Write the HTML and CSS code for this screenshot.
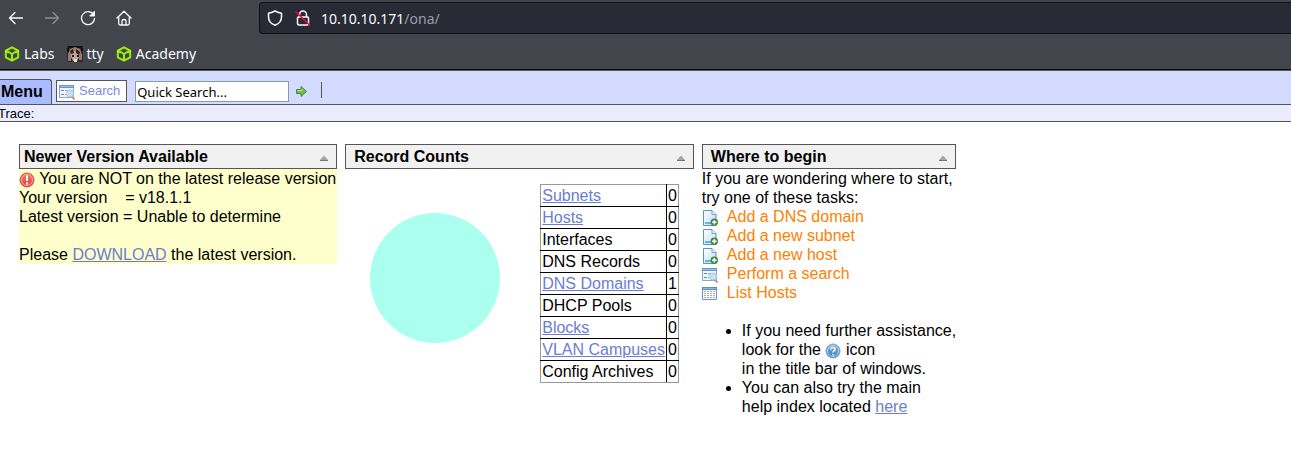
FILE: index.html
```html
<!DOCTYPE html>
<html lang="en">
<head>
<meta charset="utf-8">
<title>OpenNetAdmin</title>
<link rel="stylesheet" href="styles.css">
</head>
<body>
<svg class="defs" aria-hidden="true">
  <defs>
    <linearGradient id="page-fill" x1="0" y1="0" x2="1" y2="1"><stop offset="0" stop-color="#fff"/><stop offset="1" stop-color="#bddcf8"/></linearGradient>
    <linearGradient id="red-fill" x1="0" y1="0" x2="0" y2="1"><stop offset="0" stop-color="#f48068"/><stop offset="1" stop-color="#d93b36"/></linearGradient>
    <linearGradient id="blue-fill" x1="0" y1="0" x2="0" y2="1"><stop offset="0" stop-color="#86b3e4"/><stop offset="1" stop-color="#4379b9"/></linearGradient>
  </defs>
  <symbol id="cube" viewBox="0 0 16 16"><path d="M8 1.300 14.200 4.600v6.800L8 14.700 1.800 11.400V4.600ZM2.300 4.700 8 8l5.700-3.300M8 8v6.500" fill="none" stroke="#9fef00" stroke-width="2" stroke-linejoin="round"/></symbol>
  <symbol id="collapse" viewBox="0 0 8 5"><path d="M3.500 0h1L8 4v1H0V4Z" fill="#a5a5a5"/><path d="M0 4.500h8" stroke="#777"/></symbol>
  <symbol id="page-add" viewBox="0 0 16 16">
    <path d="M1.500.5h8.500l4 4v11H1.500Z" fill="url(#page-fill)" stroke="#5f91c9"/><path d="M10 .5v4h4" fill="#e6f2fd" stroke="#76a5d8"/><path d="M3 13h7" stroke="#55b9f0" stroke-width="2"/>
    <circle cx="12.300" cy="12.300" r="3.700" fill="#44883a"/><path d="M12.300 10v4.600M10 12.300h4.600" stroke="#fff" stroke-width="1.500"/>
  </symbol>
  <symbol id="form-search" viewBox="0 0 16 16">
    <path d="M.5 1.500h14v12H.5Z" fill="#f0f5fb" stroke="#84a8d3"/><path d="M0 2.500h15" stroke="#6398d2" stroke-width="3"/><path d="M1 2.500h13" stroke="#9cc0e8"/>
    <path d="M2 6.500h3M2 10.500h3" stroke="#548ccc"/><path d="M6 6.500h3M6 10.500h2" stroke="#aaa"/>
    <path d="m13 13 2.500 2.500" stroke="#dc9360" stroke-width="2"/><circle cx="11" cy="9.500" r="3.500" fill="#c5e1f8" stroke="#a9c7e3"/>
  </symbol>
  <symbol id="table-list" viewBox="0 0 16 16">
    <path d="M.5 1.500h14v12H.5Z" fill="#fff" stroke="#7294c4"/><path d="M0 2.500h15" stroke="#5d8dcb" stroke-width="3"/><path d="M1 2.500h13" stroke="#91b5df"/>
    <path d="M2 5.500h11M2 7.500h11M2 9.500h11M2 11.500h11" stroke="#a2adbd" stroke-dasharray="2 1"/>
  </symbol>
</svg>

<header class="browser">
  <div class="nav">
    <div class="nav-buttons">
      <button class="nav-button" aria-label="Back"><svg viewBox="0 0 16 16"><path d="M14.500 8H1.500M7 2.500 1.500 8 7 13.500"/></svg></button>
      <button class="nav-button" aria-label="Forward" disabled><svg viewBox="0 0 16 16"><path d="M1.500 8h13M9 2.500 14.500 8 9 13.500"/></svg></button>
      <button class="nav-button" aria-label="Reload"><svg viewBox="0 0 16 16"><path d="M13.700 5A6.500 6.500 0 1 0 14.500 8.500"/><path d="M14.500 1.500v4.500H10Z" fill="#fbfbfe" stroke-width="1"/></svg></button>
      <button class="nav-button" aria-label="Home"><svg viewBox="0 0 16 16"><path d="M1 8 8 1.300 15 8M2.700 7v6.500q0 1.500 1.500 1.500h7.600q1.500 0 1.500-1.500V7M6 15v-4q0-1.500 2-1.500t2 1.500v4"/></svg></button>
    </div>
    <div class="address">
      <svg class="chrome-icon" viewBox="0 0 16 16"><path d="M8 .8c2 1.500 4.300 2 6.500 2.400v3.600C14.500 11 11.800 14 8 15.300 4.200 14 1.500 11 1.500 6.800V3.200C3.700 2.800 6 2.300 8 .8Z"/></svg>
      <svg class="chrome-icon" viewBox="0 0 16 16"><path d="M4.500 7V4.500a3.500 3.500 0 0 1 7 0V7M3.500 7h9q1 0 1 1v5.500q0 1.500-1.500 1.500H4q-1.500 0-1.500-1.500V8q0-1 1-1Z"/><path class="slash" d="m1 2 13.500 13"/></svg>
      <span class="url">10.10.10.171<span class="path">/ona/</span></span>
    </div>
  </div>
  <nav class="bookmarks">
    <a href="#labs"><svg><use href="#cube"/></svg>Labs</a>
    <a href="#tty"><svg viewBox="0 0 16 16"><path d="M0 0h16v16H0Z" fill="#30292a"/><path d="M1 0h14v2H1Z" fill="#111"/><path d="M1 8 3 3l5-2 5 2 2 6v5h-3V8H4v7H1Z" fill="#9c7866"/><path d="M4 5h8v6l-2 4H6l-2-4Z" fill="#b7a89c"/><path d="M3 5 6 3l1 4-3 1ZM9 3l4 3-1 3-3-2Z" fill="#292326"/><path d="M5 9h2v2H5ZM10 9h2v2h-2Z" fill="#171b22"/><path d="M7 13h3v3H7Z" fill="#e8ded6"/><path d="M0 2h2v4H0ZM14 2h2v3h-2Z" fill="#0c0f13"/></svg>tty</a>
    <a href="#academy"><svg><use href="#cube"/></svg>Academy</a>
  </nav>
</header>

<div class="toolbar">
  <button class="menu">Menu</button>
  <button class="search"><svg class="icon"><use href="#form-search"/></svg>Search</button>
  <input class="quick" type="text" value="Quick Search..." aria-label="Quick Search">
  <button class="go" aria-label="Go"><svg viewBox="0 0 11 11"><path d="M.5 3.500h4.500v-3l5.500 5-5.500 5v-3H.5Z" fill="#78bd4b" stroke="#438737"/><path d="M1.500 4.500h4.500V3" fill="none" stroke="#b5df91"/></svg></button>
  <span class="separator"></span>
</div>
<div class="trace">Trace:</div>

<main class="desktop">
  <section class="module">
    <h2 class="title title-first">Newer Version Available <button aria-label="Collapse version"><svg><use href="#collapse"/></svg></button></h2>
    <div class="notice">
      <div><svg class="icon" viewBox="0 0 16 16"><circle cx="8" cy="8" r="7" fill="url(#red-fill)" stroke="#d95149"/><circle cx="8" cy="8" r="5.500" fill="none" stroke="#f8ada0"/><path d="M8 3.500v5.500M8 10.500v2" stroke="#fff" stroke-width="2"/></svg> You are NOT on the latest release version</div>
      <div>Your version &nbsp;&nbsp; = v18.1.1</div>
      <div>Latest version = Unable to determine</div>
      <br>
      <div>Please <a href="#download">DOWNLOAD</a> the latest version.</div>
    </div>
  </section>

  <section class="module">
    <h2 class="title">Record Counts <button aria-label="Collapse counts"><svg><use href="#collapse"/></svg></button></h2>
    <div class="counts">
      <svg class="pie" viewBox="0 0 130 130" role="img" aria-label="Record chart"><circle cx="65" cy="65" r="65" fill="#aaffee"/></svg>
      <table>
        <tr><td><a href="#subnets">Subnets</a></td><td>0</td></tr>
        <tr><td><a href="#hosts">Hosts</a></td><td>0</td></tr>
        <tr><td>Interfaces</td><td>0</td></tr>
        <tr><td>DNS Records</td><td>0</td></tr>
        <tr><td><a href="#domains">DNS Domains</a></td><td>1</td></tr>
        <tr><td>DHCP Pools</td><td>0</td></tr>
        <tr><td><a href="#blocks">Blocks</a></td><td>0</td></tr>
        <tr><td><a href="#vlans">VLAN Campuses</a></td><td>0</td></tr>
        <tr><td>Config Archives</td><td>0</td></tr>
      </table>
    </div>
  </section>

  <section class="module">
    <h2 class="title">Where to begin <button aria-label="Collapse tasks"><svg><use href="#collapse"/></svg></button></h2>
    <div>If you are wondering where to start,<br>try one of these tasks:</div>
    <div class="tasks">
      <a href="#add-domain"><svg class="icon"><use href="#page-add"/></svg>Add a DNS domain</a>
      <a href="#add-subnet"><svg class="icon"><use href="#page-add"/></svg>Add a new subnet</a>
      <a href="#add-host"><svg class="icon"><use href="#page-add"/></svg>Add a new host</a>
      <a href="#search"><svg class="icon"><use href="#form-search"/></svg>Perform a search</a>
      <a href="#list"><svg class="icon"><use href="#table-list"/></svg>List Hosts</a>
    </div>
    <ul class="help">
      <li>If you need further assistance,<br>look for the <svg class="icon" viewBox="0 0 16 16"><circle cx="8" cy="8" r="7" fill="url(#blue-fill)" stroke="#7ba5d6"/><circle cx="8" cy="8" r="5.500" fill="none" stroke="#b8d2ed"/><path d="M6 6.500q0-2 2-2t2 1.700q0 1-1 1.600T8 9.500M8 11v1.500" fill="none" stroke="#fff" stroke-width="1.500"/></svg> icon<br>in the title bar of windows.</li>
      <li>You can also try the main<br>help index located <a href="#help">here</a></li>
    </ul>
  </section>
</main>
</body>
</html>
```

FILE: styles.css
```css
* { box-sizing: border-box; }

body {
  margin: 0;
  background: #fff;
  color: #000;
  font: 16px/19px "Liberation Sans", Arial, sans-serif;
  overflow-x: hidden;
}

button { margin: 0; padding: 0; border: 0; background: none; font: inherit; color: inherit; }
a { color: #6b7dd1; }
.defs { position: absolute; width: 0; height: 0; }
.icon { width: 16px; height: 16px; flex: none; vertical-align: -4px; }

/* Browser chrome */
.browser {
  background: #42454c;
  border-bottom: 1px solid #0c0c0d;
  color: #fbfbfe;
  font-family: "Noto Sans", sans-serif;
}
.nav { display: flex; padding-top: 2px; }
.nav-buttons { display: flex; align-items: center; gap: 20px; width: 259px; padding-left: 8px; flex: none; }
.nav-button { height: 16px; }
.nav-button svg, .chrome-icon { display: block; width: 16px; height: 16px; fill: none; stroke: #fbfbfe; stroke-width: 1.5; stroke-linecap: round; stroke-linejoin: round; }
.nav-button svg { stroke-width: 1.3; }
.nav-button:disabled { opacity: 0.4; }
.address {
  display: flex;
  align-items: center;
  flex: 1;
  gap: 12px;
  height: 32px;
  padding-left: 7px;
  background: #282a36;
  border: 1px solid #0f1013;
  border-right: 0;
  border-radius: 4px 0 0 4px;
}
.address .slash { stroke: #ff0039; }
.url { font-size: 14px; margin-left: -2px; }
.path { color: #9c9ca5; }
.bookmarks { display: flex; align-items: center; gap: 12px; height: 35px; padding: 4px 4px 0; }
.bookmarks a { display: flex; align-items: center; gap: 4px; color: inherit; font-size: 14px; text-decoration: none; }
.bookmarks svg { width: 16px; height: 16px; }

/* Application bars */
.toolbar {
  display: flex;
  align-items: center;
  height: 35px;
  padding-top: 8px;
  background: #d3dbff;
  border-top: 1px solid #555;
  border-bottom: 1px solid #555;
}
.menu {
  align-self: stretch;
  width: 52px;
  padding: 0 0 2px 1px;
  background: #aabbff;
  border: 1px solid #555;
  border-width: 1px 1px 0 0;
  border-radius: 0 3px 0 0;
  font-weight: bold;
  text-align: left;
}
.search {
  display: flex;
  align-items: center;
  gap: 4px;
  height: 22px;
  margin: 0 8px 2px 4px;
  padding: 0 6px 0 2px;
  background: #fff;
  border: 1px solid #555;
  color: #7b89dc;
  font-size: 13px;
}
.search .icon { margin-top: 3px; }
.quick {
  width: 154px;
  height: 21px;
  padding: 0 1px;
  background: #fff;
  border: 1px solid #7f9db9;
  font: 13px "Noto Sans", sans-serif;
}
.go { margin: 0 14px 0 7px; }
.go svg { display: block; width: 11px; height: 11px; }
.separator { width: 1px; height: 16px; margin-bottom: 4px; background: #555; }
.trace {
  height: 17px;
  background: #ebedff;
  border-bottom: 1px solid #555;
  font-size: 13px;
  line-height: 17px;
  text-indent: -2px;
}

/* Desktop modules */
.desktop { display: flex; align-items: flex-start; gap: 8px; padding: 22px 19px; }
.title {
  display: flex;
  align-items: center;
  justify-content: space-between;
  height: 25px;
  margin: 0;
  padding: 0 8px;
  background: #f1f1f1;
  border: 1px solid #555;
  font-size: 16px;
}
.title-first { padding-left: 4px; }
.title svg { display: block; width: 8px; height: 5px; margin-top: 4px; }
.notice { padding-right: 1px; background: #ffffcc; white-space: nowrap; }
.counts { display: flex; align-items: center; gap: 40px; padding: 15px 15px 0 25px; }
.pie { width: 130px; height: 130px; margin-bottom: 12px; }
table { border-collapse: collapse; border: 1px solid #999; }
td { padding: 1px; border: 1px solid #000; }
tr:first-child td { border-top-color: #999; }
tr:last-child td { border-bottom-color: #999; }
td:first-child { border-left-color: #999; }
td:last-child { border-right-color: #999; }
.tasks { display: flex; flex-direction: column; align-items: flex-start; }
.tasks a { display: flex; align-items: flex-end; gap: 9px; height: 19px; color: #ff7f00; text-decoration: none; }
.help { margin: 19px 0 0; padding-left: 40px; }
```
